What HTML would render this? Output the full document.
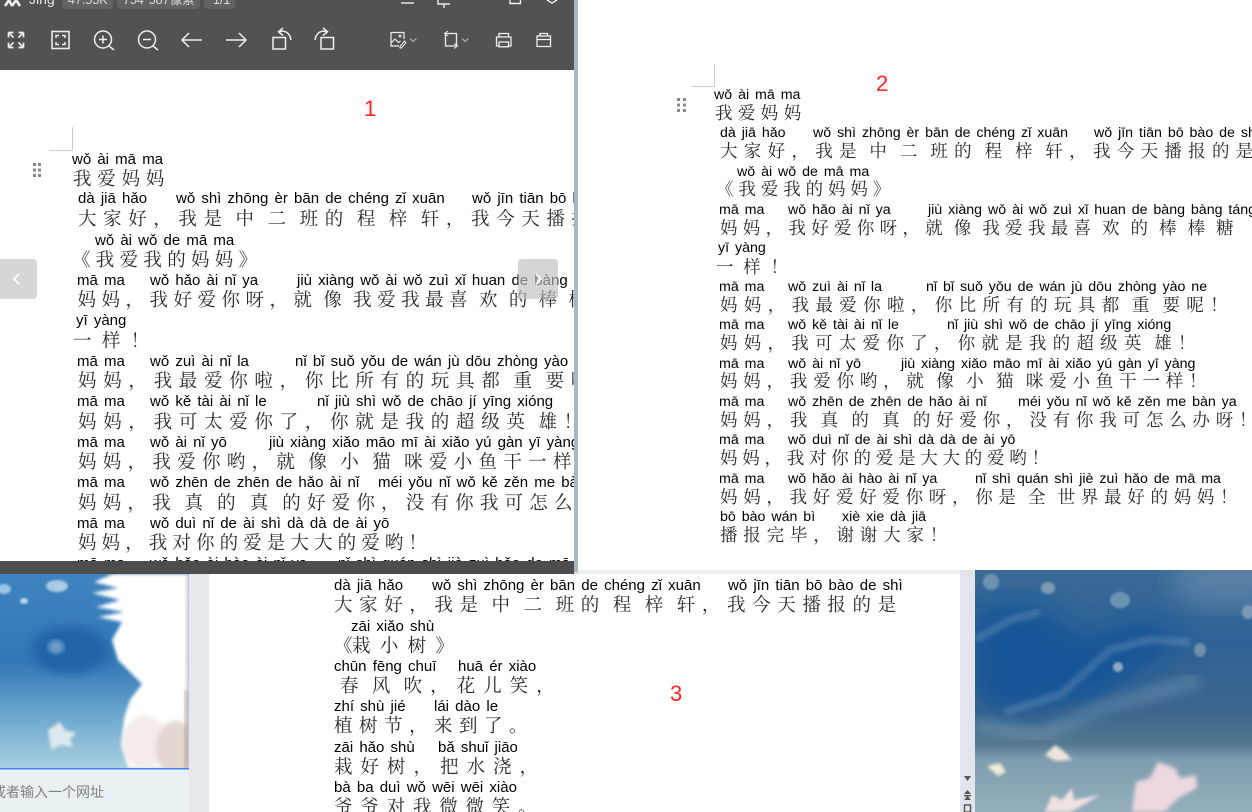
<!DOCTYPE html>
<html lang="zh"><head><meta charset="utf-8"><style>
html,body{margin:0;padding:0;width:1252px;height:812px;overflow:hidden;background:#fff}
.a{position:absolute}
.p,.h{position:absolute;white-space:pre;color:#000}
.p{font:15px/16px "Liberation Sans",sans-serif;word-spacing:2px;margin-top:1px}
.h{font:18.5px/22px "Noto Serif CJK SC","Liberation Serif",serif;letter-spacing:5.5px;word-spacing:-4.4px;color:#2a2a2a}
.d2 .p{font-size:14.2px;word-spacing:2px}
.d2 .h{font-size:17.5px}
.n{position:absolute;color:#f22;font:22px/26px "Liberation Sans",sans-serif}
.ic{stroke:#eee;fill:none;stroke-width:1.4}
</style></head><body>

<!-- backgrounds -->
<svg class="a" style="left:0;top:0" width="1252" height="812" viewBox="0 0 1252 812">
<defs>
<linearGradient id="l" x1="0" y1="0" x2="0" y2="1"><stop offset="0" stop-color="#3f84c0"/><stop offset=".45" stop-color="#3177b6"/><stop offset=".72" stop-color="#6aa5cc"/><stop offset="1" stop-color="#a9d0df"/></linearGradient>
<linearGradient id="r" x1="0" y1="0" x2="0" y2="1"><stop offset="0" stop-color="#3a6a96"/><stop offset=".3" stop-color="#2e6196"/><stop offset=".6" stop-color="#3f668c"/><stop offset=".72" stop-color="#55788f"/><stop offset=".78" stop-color="#7d9cae"/><stop offset="1" stop-color="#94afbc"/></linearGradient>
<filter id="b1"><feGaussianBlur stdDeviation="1"/></filter>
<filter id="b15"><feGaussianBlur stdDeviation="1.6"/></filter>
<filter id="b2"><feGaussianBlur stdDeviation="2"/></filter>
<filter id="b4"><feGaussianBlur stdDeviation="5"/></filter>
<filter id="b9"><feGaussianBlur stdDeviation="14"/></filter>
<clipPath id="cl"><rect x="0" y="574" width="189" height="194"/></clipPath>
<clipPath id="cr"><rect x="975" y="570" width="277" height="242"/></clipPath>
</defs>
<g clip-path="url(#cl)">
<rect x="0" y="574" width="189" height="194" fill="url(#l)"/>
<ellipse cx="70" cy="650" rx="38" ry="24" fill="#2164a8" filter="url(#b4)"/>
<ellipse cx="57" cy="586" rx="11" ry="6" fill="#a9cbe4" filter="url(#b1)"/>
<ellipse cx="4" cy="589" rx="7" ry="5" fill="#9cc4e2" filter="url(#b1)"/>
<ellipse cx="24" cy="601" rx="4" ry="3" fill="#b8d6ea" filter="url(#b1)"/>
<ellipse cx="56" cy="647" rx="8" ry="7" fill="#6a9cc8" filter="url(#b2)"/>
<path d="M113 574L94 582L118 588L92 593L120 600L96 607L124 612L98 617L122 622L112 640L118 660L130 672L142 684L130 700L124 718L122 745L128 768H189V574Z" fill="#fff" filter="url(#b15)"/>
<ellipse cx="145" cy="742" rx="23" ry="26" fill="#f3ece8" filter="url(#b2)"/>
<ellipse cx="176" cy="748" rx="20" ry="27" fill="#e2d7d1" filter="url(#b2)"/>
<rect x="184" y="690" width="5" height="78" fill="#a99" opacity=".5" filter="url(#b1)"/>
<rect x="185" y="574" width="4" height="120" fill="#ccc" opacity=".45" filter="url(#b1)"/>
<path d="M48 730l12-8 5 8 11 3-6 6 3 8-12-2-10 5-1-9z" fill="#dde8ef" filter="url(#b15)"/>
</g>
<rect x="0" y="769" width="189" height="43" fill="#e9f0f4"/>
<rect x="0" y="768" width="189" height="1.5" fill="#3f87f2"/>
<rect x="189" y="570" width="20" height="242" fill="#e5e8ec"/>
<rect x="960" y="570" width="15" height="242" fill="#e2e6ec"/>
<g fill="#555"><path d="M964 776h7l-3.500 5z"/><path d="M967.500 790l3.500 4h-7zM964 795h7v1.500h-7zM967.500 796l3.500 4h-7z"/><rect x="964.500" y="805" width="6" height="7" fill="none" stroke="#555" stroke-width="1.500"/></g>
<g clip-path="url(#cr)">
<rect x="975" y="570" width="277" height="242" fill="url(#r)"/>
<path d="M975 610L1030 600L1080 640L1150 620L1180 640L1100 700L1000 715L975 700Z" fill="#175597" filter="url(#b9)"/>
<ellipse cx="1230" cy="580" rx="60" ry="30" fill="#6f8fae" opacity=".6" filter="url(#b9)"/>
<path d="M1005 712L1060 695L1110 650L1150 640L1190 642" stroke="#9ab6cf" stroke-width="8" fill="none" opacity=".25" filter="url(#b2)"/>
<path d="M975 640L1010 620L1040 612" stroke="#9ab6cf" stroke-width="8" fill="none" opacity=".25" filter="url(#b2)"/>
<path d="M975 725L1040 735L1110 705L1200 680" stroke="#8aa8c0" stroke-width="16" fill="none" opacity=".3" filter="url(#b4)"/>
<path d="M1132 812L1136 782L1150 778L1158 762L1175 768L1180 778L1196 775L1197 788L1180 797L1164 812Z" fill="#ecd9df" filter="url(#b2)"/>
<path d="M1045 812L1052 795L1062 800L1072 788L1074 800L1100 795L1078 808L1070 812Z" fill="#efe2e0" filter="url(#b15)"/>
<path d="M1045 755L1055 745L1065 752L1072 760L1055 761Z" fill="#ece4dc" filter="url(#b15)"/>
<path d="M987 766L1000 763L1006 772L998 776Z" fill="#f1e9d8" filter="url(#b15)"/>
<ellipse cx="991" cy="582" rx="8" ry="8" fill="#6d93b3" filter="url(#b1)"/>
<ellipse cx="1048" cy="588" rx="7" ry="6" fill="#7a9ab4" filter="url(#b1)"/>
<ellipse cx="1120" cy="600" rx="10" ry="8" fill="#6e94b4" filter="url(#b1)"/>
<ellipse cx="1248" cy="612" rx="6" ry="7" fill="#7b9ab8" filter="url(#b1)"/>
<ellipse cx="1118" cy="667" rx="5" ry="5" fill="#8aa8bf" filter="url(#b1)"/>
<ellipse cx="1200" cy="650" rx="6" ry="7" fill="#7090ad" filter="url(#b1)"/>
</g>
<rect x="578" y="262" width="117" height="33" fill="#fffff5"/>
<rect x="189" y="569" width="771" height="5" fill="#eee"/>
<rect x="209" y="574" width="751" height="238" fill="#fff"/>
<rect x="574" y="0" width="4" height="574" fill="#aeb6bc"/>
<rect x="574" y="572" width="5" height="2" fill="#ddd"/>
</svg>
<div class="a" style="left:-8px;top:784px;font:14px/16px 'Liberation Sans','Noto Sans CJK SC',sans-serif;color:#808080;white-space:pre">或者输入一个网址</div>
<div class="a" style="left:578px;top:270px;font:22px/24px 'Liberation Serif',serif;color:#f8f8ee;letter-spacing:.5px">1762734151</div>

<!-- doc 3 -->
<div class="a" style="left:0;top:0;width:1252px;height:812px;overflow:hidden">
<div class="p" style="left:334px;top:577px">dà jiā hǎo</div><div class="p" style="left:432px;top:577px">wǒ shì zhōng èr bān de chéng zǐ xuān</div><div class="p" style="left:728px;top:577px">wǒ jīn tiān bō bào de shì</div>
<div class="h" style="left:334px;top:593px;letter-spacing:6.6px">大家好，我是 中 二 班的 程 梓 轩，我今天播报的是</div>
<div class="p" style="left:351px;top:618px">zāi xiǎo shù</div>
<div class="h" style="left:334px;top:634px;letter-spacing:0">《</div><div class="h" style="left:352px;top:634px;letter-spacing:5.500px;word-spacing:-6.400px">栽 小 树 》</div>
<div class="p" style="left:334px;top:658px">chūn fēng chuī</div><div class="p" style="left:458px;top:658px">huā ér xiào</div>
<div class="h" style="left:340px;top:674px;letter-spacing:8px;word-spacing:-7.400px">春 风 吹，花儿笑，</div>
<div class="p" style="left:334px;top:698px">zhí shù jié</div><div class="p" style="left:434px;top:698px">lái dào le</div>
<div class="h" style="left:334px;top:714px;letter-spacing:6.500px">植树节，来到了。</div>
<div class="p" style="left:334px;top:739px">zāi hǎo shù</div><div class="p" style="left:438px;top:739px">bǎ shuǐ jiāo</div>
<div class="h" style="left:334px;top:755px;letter-spacing:8px">栽好树，把水浇，</div>
<div class="p" style="left:334px;top:779px">bà ba duì wǒ wēi wēi xiào</div>
<div class="h" style="left:334px;top:795px;letter-spacing:7.800px">爷爷对我微微笑。</div>
</div>
<div class="n" style="left:670px;top:681px">3</div>

<!-- doc 2 -->
<div class="a d2" style="left:578px;top:0;width:674px;height:570px;overflow:hidden;background:#fff">
<svg class="a" style="left:0;top:0" width="674" height="570">
<path d="M136.500 64v22.500H114" stroke="#ccc" fill="none"/>
<g fill="#888"><rect x="99" y="98" width="3" height="3"/><rect x="105" y="98" width="3" height="3"/><rect x="99" y="103.500" width="3" height="3"/><rect x="105" y="103.500" width="3" height="3"/><rect x="99" y="109" width="3" height="3"/><rect x="105" y="109" width="3" height="3"/></g>
</svg>
<div class="p" style="left:136px;top:86px">wǒ ài mā ma</div>
<div class="h" style="left:137px;top:102px;letter-spacing:5.400px">我爱妈妈</div>
<div class="p" style="left:142px;top:124px">dà jiā hǎo</div><div class="p" style="left:235px;top:124px">wǒ shì zhōng èr bān de chéng zǐ xuān</div><div class="p" style="left:516px;top:124px">wǒ jīn tiān bō bào de shì</div>
<div class="h" style="left:142px;top:140px;letter-spacing:6.300px;word-spacing:-4.150px">大家好，我是 中 二 班的 程 梓 轩，我今天播报的是</div>
<div class="p" style="left:159px;top:163px">wǒ ài wǒ de mā ma</div>
<div class="h" style="left:138px;top:178px;letter-spacing:4.900px">《我爱我的妈妈》</div>
<div class="p" style="left:141px;top:201px">mā ma</div><div class="p" style="left:210px;top:201px">wǒ hǎo ài nǐ ya</div><div class="p" style="left:350px;top:201px">jiù xiàng wǒ ài wǒ zuì xǐ huan de bàng bàng táng</div>
<div class="h" style="left:142px;top:217px;letter-spacing:5.300px;word-spacing:-4.050px">妈妈，我好爱你呀，就 像 我爱我最喜 欢 的 棒 棒 糖</div>
<div class="p" style="left:140px;top:239px">yī yàng</div>
<div class="h" style="left:138px;top:256px;letter-spacing:5.100px;word-spacing:-4.950px">一 样 ！</div>
<div class="p" style="left:141px;top:278px">mā ma</div><div class="p" style="left:210px;top:278px">wǒ zuì ài nǐ la</div><div class="p" style="left:348px;top:278px">nǐ bǐ suǒ yǒu de wán jù dōu zhòng yào ne</div>
<div class="h" style="left:142px;top:294px;letter-spacing:6.360px;word-spacing:-4.400px">妈妈，我最爱你啦，你比所有的玩具都 重 要呢！</div>
<div class="p" style="left:141px;top:316px">mā ma</div><div class="p" style="left:210px;top:316px">wǒ kě tài ài nǐ le</div><div class="p" style="left:369px;top:316px">nǐ jiù shì wǒ de chāo jí yīng xióng</div>
<div class="h" style="left:142px;top:332px;letter-spacing:6.260px;word-spacing:-4.300px">妈妈，我可太爱你了，你就是我的超级英 雄！</div>
<div class="p" style="left:141px;top:355px">mā ma</div><div class="p" style="left:210px;top:355px">wǒ ài nǐ yō</div><div class="p" style="left:323px;top:355px">jiù xiàng xiǎo māo mī ài xiǎo yú gàn yī yàng</div>
<div class="h" style="left:142px;top:370px;letter-spacing:5.800px;word-spacing:-3.700px">妈妈，我爱你哟，就 像 小 猫 咪爱小鱼干一样！</div>
<div class="p" style="left:141px;top:393px">mā ma</div><div class="p" style="left:210px;top:393px">wǒ zhēn de zhēn de hǎo ài nǐ</div><div class="p" style="left:440px;top:393px">méi yǒu nǐ wǒ kě zěn me bàn ya</div>
<div class="h" style="left:142px;top:409px;letter-spacing:5.800px;word-spacing:-2.850px">妈妈，我 真 的 真 的好爱你，没有你我可怎么办呀！</div>
<div class="p" style="left:141px;top:431px">mā ma</div><div class="p" style="left:210px;top:431px">wǒ duì nǐ de ài shì dà dà de ài yō</div>
<div class="h" style="left:142px;top:447px;letter-spacing:4.750px">妈妈，我对你的爱是大大的爱哟！</div>
<div class="p" style="left:141px;top:470px">mā ma</div><div class="p" style="left:210px;top:470px">wǒ hǎo ài hào ài nǐ ya</div><div class="p" style="left:397px;top:470px">nǐ shì quán shì jiè zuì hǎo de mā ma</div>
<div class="h" style="left:142px;top:486px;letter-spacing:5.700px;word-spacing:-3.750px">妈妈，我好爱好爱你呀，你是 全 世界最好的妈妈！</div>
<div class="p" style="left:142px;top:508px">bō bào wán bì</div><div class="p" style="left:264px;top:508px">xiè xie dà jiā</div>
<div class="h" style="left:142px;top:524px;letter-spacing:5.800px">播报完毕，谢谢大家！</div>
<div class="n" style="left:298px;top:71px">2</div>
</div>

<!-- doc 1 -->
<div class="a" style="left:0;top:0;width:574px;height:574px;overflow:hidden;background:#fff">
<svg class="a" style="left:0;top:0" width="574" height="200">
<path d="M72.500 127v23.500H49" stroke="#ccc" fill="none"/>
<g fill="#888"><rect x="33" y="163" width="3" height="3"/><rect x="38" y="163" width="3" height="3"/><rect x="33" y="168.500" width="3" height="3"/><rect x="38" y="168.500" width="3" height="3"/><rect x="33" y="174" width="3" height="3"/><rect x="38" y="174" width="3" height="3"/></g>
</svg>
<div class="p" style="left:72px;top:151px">wǒ ài mā ma</div>
<div class="h" style="left:73px;top:167px;letter-spacing:5.800px">我爱妈妈</div>
<div class="p" style="left:78px;top:190px">dà jiā hǎo</div><div class="p" style="left:176px;top:190px">wǒ shì zhōng èr bān de chéng zǐ xuān</div><div class="p" style="left:472px;top:190px">wǒ jīn tiān bō bào de shì</div>
<div class="h" style="left:78px;top:207px;letter-spacing:6.600px">大家好，我是 中 二 班的 程 梓 轩，我今天播报的是</div>
<div class="p" style="left:95px;top:232px">wǒ ài wǒ de mā ma</div>
<div class="h" style="left:72px;top:248px;letter-spacing:5.300px">《我爱我的妈妈》</div>
<div class="p" style="left:77px;top:272px">mā ma</div><div class="p" style="left:150px;top:272px">wǒ hǎo ài nǐ ya</div><div class="p" style="left:297px;top:272px">jiù xiàng wǒ ài wǒ zuì xǐ huan de bàng bàng táng</div>
<div class="h" style="left:77.500px;top:288px">妈妈，我好爱你呀，就 像 我爱我最喜 欢 的 棒 棒 糖</div>
<div class="p" style="left:76px;top:312px">yī yàng</div>
<div class="h" style="left:73px;top:329px;word-spacing:-5.400px">一 样 ！</div>
<div class="p" style="left:77px;top:353px">mā ma</div><div class="p" style="left:150px;top:353px">wǒ zuì ài nǐ la</div><div class="p" style="left:295px;top:353px">nǐ bǐ suǒ yǒu de wán jù dōu zhòng yào ne</div>
<div class="h" style="left:78px;top:369px;letter-spacing:6.700px;word-spacing:-4.400px">妈妈，我最爱你啦，你比所有的玩具都 重 要呢！</div>
<div class="p" style="left:77px;top:393px">mā ma</div><div class="p" style="left:150px;top:393px">wǒ kě tài ài nǐ le</div><div class="p" style="left:317px;top:393px">nǐ jiù shì wǒ de chāo jí yīng xióng</div>
<div class="h" style="left:78px;top:410px;letter-spacing:6.700px;word-spacing:-4.600px">妈妈，我可太爱你了，你就是我的超级英 雄！</div>
<div class="p" style="left:77px;top:434px">mā ma</div><div class="p" style="left:150px;top:434px">wǒ ài nǐ yō</div><div class="p" style="left:269px;top:434px">jiù xiàng xiǎo māo mī ài xiǎo yú gàn yī yàng</div>
<div class="h" style="left:78px;top:450px;letter-spacing:6.300px;word-spacing:-3.900px">妈妈，我爱你哟，就 像 小 猫 咪爱小鱼干一样！</div>
<div class="p" style="left:77px;top:474px">mā ma</div><div class="p" style="left:150px;top:474px">wǒ zhēn de zhēn de hǎo ài nǐ</div><div class="p" style="left:378px;top:474px">méi yǒu nǐ wǒ kě zěn me bàn ya</div>
<div class="h" style="left:78px;top:491px;letter-spacing:6.200px;word-spacing:-3.100px">妈妈，我 真 的 真 的好爱你，没有你我可怎么办呀！</div>
<div class="p" style="left:77px;top:515px">mā ma</div><div class="p" style="left:150px;top:515px">wǒ duì nǐ de ài shì dà dà de ài yō</div>
<div class="h" style="left:78px;top:531px;letter-spacing:5.100px">妈妈，我对你的爱是大大的爱哟！</div>
<div class="p" style="left:77px;top:555px">mā ma</div><div class="p" style="left:150px;top:555px">wǒ hǎo ài hào ài nǐ ya</div><div class="p" style="left:338px;top:555px">nǐ shì quán shì jiè zuì hǎo de mā ma</div>
<div class="n" style="left:364px;top:96px">1</div>

<!-- nav buttons -->
<div class="a" style="left:-3px;top:259px;width:40px;height:40px;border-radius:4px;background:rgba(210,210,210,.9)"></div>
<svg class="a" style="left:12px;top:272px" width="10" height="14"><path d="M7 2L2 7L7 12" stroke="#fff" stroke-width="1.600" fill="none"/></svg>
<div class="a" style="left:518px;top:259px;width:40px;height:40px;border-radius:4px;background:rgba(190,190,190,.65)"></div>
<svg class="a" style="left:533px;top:272px" width="10" height="14"><path d="M3 2L8 7L3 12" stroke="#fff" stroke-width="1.600" fill="none"/></svg>

<!-- bottom bar -->
<div class="a" style="left:0;top:561px;width:574px;height:13px;background:#4d4d4d"></div>

<!-- toolbar -->
<div class="a" style="left:0;top:0;width:574px;height:70px;background:#525252"></div>
<div class="a" style="left:62px;top:-17px;width:51px;height:26px;border-radius:4px;background:#636363"></div>
<div class="a" style="left:117px;top:-17px;width:83px;height:26px;border-radius:4px;background:#636363"></div>
<div class="a" style="left:204px;top:-17px;width:31px;height:26px;border-radius:4px;background:#636363"></div>
<div class="a" style="left:29px;top:-9px;font:14px/16px 'Liberation Sans',sans-serif;color:#e6e6e6;white-space:pre">Jing</div>
<div class="a" style="left:68px;top:-8px;font:12.500px/16px 'Liberation Sans',sans-serif;color:#ddd;white-space:pre">47.55K</div>
<div class="a" style="left:123px;top:-8px;font:12.500px/16px 'Liberation Sans','Noto Sans CJK SC',sans-serif;color:#ddd;white-space:pre">754*587像素</div>
<div class="a" style="left:213px;top:-8px;font:12.500px/16px 'Liberation Sans',sans-serif;color:#ddd;white-space:pre">1/1</div>
<svg class="a ic" style="left:0;top:0" width="574" height="70" viewBox="0 0 574 70">
<path d="M5 6l4-6M9 0l3 6M12 6l4-6M16 0l4 6" stroke-width="2.600"/>
<path d="M401 3h13"/><path d="M438 0v4h12M444 4v4"/><path d="M510 0v3.500h10.500V0"/><path d="M547 0l5 3 5-3"/>
<!-- expand -->
<path d="M8.500 32.500h5M8.500 32.500v5M8.500 32.500l5 5M23.500 32.500h-5M23.500 32.500v5M23.500 32.500l-5 5M8.500 47.500h5M8.500 47.500v-5M8.500 47.500l5-5M23.500 47.500h-5M23.500 47.500v-5M23.500 47.500l-5-5" stroke-width="1.700"/>
<!-- fit -->
<rect x="52" y="31.500" width="17" height="17" stroke-width="1.600"/>
<path d="M56 38v-2.500h3M65 38v-2.500h-3M56 42v2.500h3M65 42v2.500h-3" stroke-width="1.500"/>
<!-- zoom in -->
<circle cx="103" cy="39.500" r="8.500" stroke-width="1.500"/><path d="M109 46l5 4M99 39.500h8M103 35.500v8" stroke-width="1.500"/>
<!-- zoom out -->
<circle cx="147" cy="39.500" r="8.500" stroke-width="1.500"/><path d="M153 46l5 4M143 39.500h8" stroke-width="1.500"/>
<!-- arrows -->
<path d="M182 40h20M189 33l-7 7 7 7" stroke-width="1.500"/>
<path d="M226 40h20M239 33l7 7-7 7" stroke-width="1.500"/>
<!-- rotate left -->
<rect x="273" y="37.500" width="12.500" height="11.500" stroke-width="1.500"/>
<path d="M279 32c5-2.500 11 .5 12 8M283 28l-4.500 3.800 4.500 3.700" stroke-width="1.500"/>
<!-- rotate right -->
<rect x="321" y="37.500" width="12.500" height="11.500" stroke-width="1.500"/>
<path d="M327 32c-5-2.500-11 .5-12 8M323 28l4.500 3.800-4.500 3.700" stroke-width="1.500"/>
<!-- image edit -->
<path d="M404 39v-6.500h-13v13.500h8" stroke-width="1.200"/><path d="M391 43l4-4 3.500 3.500 2-1.500" stroke-width="1.100"/><circle cx="400" cy="36" r="1" stroke-width="1"/><path d="M400 46.500l4.500-5.500 1.500 1.500-4.500 5.500h-1.500z" stroke-width="1"/>
<path d="M410 38.500l3.200 3 3.200-3" stroke="#aaa" stroke-width="1.200"/>
<!-- crop -->
<path d="M445.500 33.500h11v13M445.500 33.500v12.500h11" stroke-width="1.300"/><path d="M448 31l-3.500 2.500 3.500 2.500M454 43.500l3.500 2.500-3.500 2.500" stroke-width="1"/>
<path d="M462 38.500l3.200 3 3.200-3" stroke="#aaa" stroke-width="1.200"/>
<!-- print -->
<path d="M499 37v-3.500h9.500v3.500M499 46h-2.500v-9h14.500v9h-2.500" stroke-width="1.300"/><rect x="499" y="42" width="9.500" height="4.800" stroke-width="1.300"/>
<!-- box -->
<rect x="537" y="36" width="13.500" height="10.500" stroke-width="1.300"/><path d="M540 36v-2.500h7.500v2.500M537 39.500h13.500M542.500 39.500h2.500" stroke-width="1.300"/>
</svg>
</div>
</body></html>
